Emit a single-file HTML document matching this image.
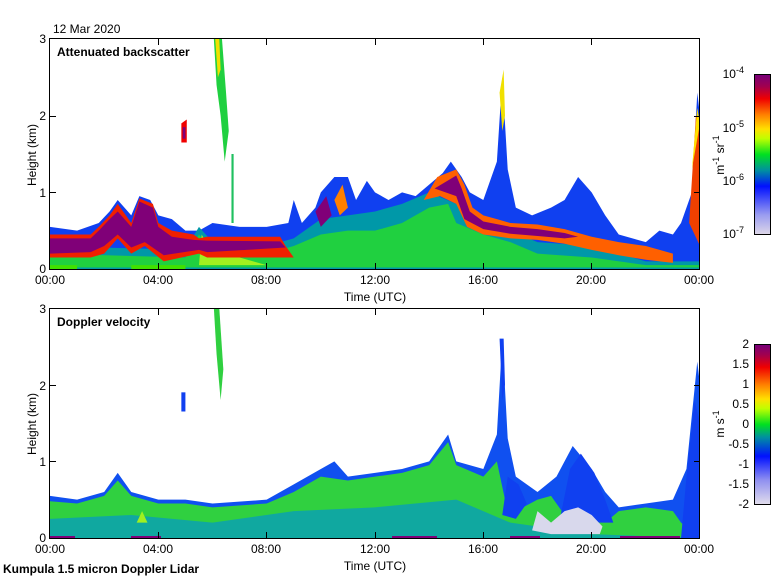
<!DOCTYPE html>
<html><head><meta charset="utf-8"><style>
html,body{margin:0;padding:0;background:#fff;}
svg{display:block;font-family:"Liberation Sans",sans-serif;}
</style></head><body>
<svg width="780" height="580" viewBox="0 0 780 580" xmlns="http://www.w3.org/2000/svg">
<defs>
<linearGradient id="cb1" x1="0" y1="1" x2="0" y2="0">
<stop offset="0" stop-color="#dcd6e8"/><stop offset="0.12" stop-color="#9a9cf0"/>
<stop offset="0.3" stop-color="#0010ff"/><stop offset="0.4" stop-color="#0090a0"/>
<stop offset="0.5" stop-color="#00e020"/><stop offset="0.6" stop-color="#c0ff00"/>
<stop offset="0.66" stop-color="#ffe000"/><stop offset="0.75" stop-color="#ff8000"/>
<stop offset="0.85" stop-color="#f00000"/><stop offset="0.93" stop-color="#a00050"/>
<stop offset="1" stop-color="#780078"/></linearGradient>
<linearGradient id="cb2" x1="0" y1="1" x2="0" y2="0">
<stop offset="0" stop-color="#e0dcec"/><stop offset="0.15" stop-color="#9090f0"/>
<stop offset="0.3" stop-color="#0010ff"/><stop offset="0.42" stop-color="#0090a0"/>
<stop offset="0.5" stop-color="#00e020"/><stop offset="0.6" stop-color="#c0ff00"/>
<stop offset="0.66" stop-color="#ffe000"/><stop offset="0.75" stop-color="#ff8000"/>
<stop offset="0.86" stop-color="#f00000"/><stop offset="0.94" stop-color="#a00050"/>
<stop offset="1" stop-color="#780078"/></linearGradient>
</defs>

<text x="53" y="33" font-size="12">12 Mar 2020</text>

<!-- TOP PLOT DATA -->
<g transform="translate(50,269) scale(27.083,-76.667)">
<polygon fill="#1040f0" points="0,0 0,0.55 1,0.5 1.8,0.6 2.2,0.75 2.5,0.9 3,0.7 3.3,0.95 3.7,0.9 4,0.7 4.5,0.65 5,0.5 5.5,0.5 6,0.6 7,0.55 8,0.55 8.8,0.6 9,0.9 9.3,0.6 9.8,0.8 10,1.0 10.5,1.2 11,1.2 11.3,0.9 11.7,1.15 12,1.0 12.5,0.9 13,1.0 13.5,0.95 14,1.1 14.5,1.25 14.8,1.4 15.2,1.2 15.5,1.0 16,0.9 16.5,1.4 16.7,2.5 16.9,1.3 17.2,0.8 17.8,0.7 18.5,0.8 19,0.9 19.5,1.2 20,1.0 20.5,0.7 21,0.45 22,0.35 22.5,0.5 23,0.45 23.3,0.6 23.7,1.0 23.9,2.3 24,2.0 24,0"/>
<polygon fill="#0098a8" points="0,0 0,0.3 5,0.25 5.5,0.55 6,0.35 8,0.3 9,0.4 10,0.65 11,0.7 12,0.75 13,0.85 14,1.0 15,0.85 16,0.65 17,0.5 18,0.35 20,0.3 22,0.1 24,0.1 24,0"/>
<polygon fill="#20d040" points="0,0.02 0,0.2 5,0.15 5.5,0.45 6,0.22 8,0.2 9,0.3 10,0.45 11,0.5 12,0.5 13,0.6 14,0.8 14.7,0.85 15,0.6 16,0.45 17,0.35 18,0.2 20,0.15 22,0.05 24,0.05 24,0.02"/>
<polygon fill="#a0f020" points="5.5,0.05 5.6,0.45 6,0.2 7,0.15 8,0.05"/>
<!-- red border of purple band -->
<polygon fill="#f02000" points="0,0.15 0,0.45 1.5,0.45 1.8,0.55 2.2,0.7 2.5,0.85 3,0.6 3.3,0.92 3.8,0.85 4,0.6 4.5,0.5 5.3,0.45 5.5,0.4 5.8,0.42 8.5,0.42 8.7,0.3 9,0.15 5.8,0.15 5.5,0.2 4.2,0.1 3.5,0.3 3,0.2 2.5,0.4 2,0.2 1.5,0.15"/>
<polygon fill="#800078" points="0,0.2 0,0.4 1.5,0.4 1.8,0.5 2.2,0.65 2.5,0.75 3,0.55 3.3,0.88 3.8,0.8 4,0.55 4.5,0.42 5.3,0.38 5.8,0.37 8.5,0.36 8.7,0.28 5.8,0.22 5.5,0.25 4.2,0.18 3.5,0.35 3,0.28 2.5,0.45 2,0.3 1.5,0.22"/>
<!-- red curve 14-22 -->
<polygon fill="#ff6000" points="13.8,0.9 14.3,1.2 15,1.3 15.3,1.1 15.6,0.8 16,0.7 16.5,0.65 17,0.6 18,0.58 19,0.52 20,0.42 21,0.35 22,0.3 23,0.2 23,0.08 22,0.12 21,0.18 20,0.25 19,0.33 18,0.38 17,0.4 16,0.45 15.4,0.55 15,0.85 14.4,0.95"/>
<polygon fill="#800078" points="14.2,1.05 15,1.22 15.2,1.05 15.5,0.75 16,0.62 17,0.55 18,0.52 19,0.47 19.5,0.42 19,0.4 18,0.43 17,0.46 16,0.52 15.3,0.65 15,0.95"/>
<polygon fill="#800078" points="9.8,0.75 10.2,0.95 10.4,0.7 10,0.55"/>
<polygon fill="#ff8000" points="10.5,0.9 10.8,1.1 11,0.8 10.7,0.7"/>
<!-- isolated bits -->
<polygon fill="#f00000" points="4.85,1.65 4.85,1.9 5.05,1.95 5.05,1.65"/>
<polygon fill="#800078" points="4.9,1.7 4.9,1.85 5.0,1.85 5.0,1.7"/>
<polygon fill="#20d040" points="6.05,3 6.35,3 6.5,2.3 6.6,1.8 6.45,1.4 6.3,2.0 6.15,2.4"/>
<polygon fill="#f0e000" points="6.1,3 6.25,3 6.3,2.6 6.2,2.5"/>
<polygon fill="#20c060" points="6.7,0.6 6.78,0.6 6.78,1.5 6.7,1.5"/>
<polygon fill="#f0e000" points="16.6,2.3 16.75,2.6 16.8,2.0 16.7,1.8"/>
<polygon fill="#f04000" points="23.6,0.6 23.85,2.0 24,1.9 24,0.3"/>
<polygon fill="#ffe000" points="23.7,1.3 23.9,2.1 24,1.9"/>
<!-- bottom strips -->
<polygon fill="#40e000" points="0,0 0,0.05 1.0,0.05 1.0,0 3.0,0 3.0,0.05 5.0,0.05 5.0,0"/>
</g>

<!-- BOTTOM PLOT DATA -->
<g transform="translate(50,538) scale(27.083,-76.667)">
<polygon fill="#1050f0" points="0,0 0,0.55 1,0.5 2,0.6 2.5,0.85 3,0.6 4,0.5 5,0.5 6,0.45 8,0.5 9,0.7 10,0.9 10.5,1.0 11,0.8 12,0.85 13,0.9 14,1.0 14.7,1.35 15,1.0 16,0.9 16.5,1.35 16.7,2.6 16.9,1.3 17.2,0.8 18,0.6 18.7,0.8 19.3,1.2 20,0.9 20.5,0.6 21,0.4 22,0.45 23,0.5 23.5,0.9 23.9,2.3 24,2.0 24,0"/>
<polygon fill="#30d040" points="0,0 0,0.48 1,0.45 2,0.55 2.5,0.75 3,0.55 4,0.45 5,0.45 6,0.4 8,0.45 9,0.6 10,0.8 11,0.75 12,0.8 13,0.85 14,0.95 14.7,1.25 15,0.95 16,0.8 16.5,1.0 16.8,0.5 17.2,0.35 18,0.5 18.5,0.55 19,0.3 20.5,0.2 21,0.35 22,0.4 23,0.35 23.3,0.2 24,0"/>
<polygon fill="#10a8a0" points="0,0 0,0.25 3,0.3 6,0.2 9,0.35 12,0.4 15,0.5 17,0.2 20,0.05 24,0"/>
<polygon fill="#a0f020" points="3.2,0.2 3.4,0.35 3.6,0.2"/>
<polygon fill="#1040f0" points="16.7,0.3 16.9,0.8 17.3,0.7 17.6,0.45 17.2,0.25"/>
<polygon fill="#1040f0" points="18.8,0.2 19.2,0.9 19.6,1.1 20.1,0.85 20.5,0.5 20.8,0.2"/>
<polygon fill="#1040f0" points="23.3,0 23.5,0.8 23.8,1.8 24,1.5 24,0"/>
<polygon fill="#d8d8ec" points="17.8,0.1 18,0.35 18.5,0.2 19,0.35 19.5,0.4 20,0.3 20.4,0.15 20.3,0.05 18.5,0.05"/>
<polygon fill="#30d040" points="6.05,3 6.25,3 6.4,2.2 6.3,1.8 6.15,2.4"/>
<polygon fill="#1040f0" points="4.85,1.65 4.85,1.9 5.0,1.9 5.0,1.65"/>
<polygon fill="#1040f0" points="16.6,2.6 16.75,2.6 16.8,2.0 16.7,1.8"/>
</g>
<g fill="#800078">
<rect x="50" y="536" width="25" height="3"/><rect x="131" y="536" width="30" height="3"/>
<rect x="392" y="536" width="45" height="3"/><rect x="510" y="536" width="30" height="3"/>
<rect x="620" y="536" width="60" height="3"/>
</g>

<!-- AXES FRAMES -->
<g fill="none" stroke="#000" stroke-width="1">
<rect x="49.5" y="38.5" width="650" height="231"/>
<rect x="49.5" y="308.5" width="650" height="230"/>
<rect x="754.5" y="74.5" width="16" height="160"/>
<rect x="754.5" y="344.5" width="16" height="160"/>
<path d="M158.5,39v6M266.5,39v6M375.5,39v6M483.5,39v6M591.5,39v6M158.5,269v-6M266.5,269v-6M375.5,269v-6M483.5,269v-6M591.5,269v-6M50,192.5h6M50,116.5h6M700,192.5h-6M700,116.5h-6"/>
<path d="M158.5,309v6M266.5,309v6M375.5,309v6M483.5,309v6M591.5,309v6M158.5,538v-6M266.5,538v-6M375.5,538v-6M483.5,538v-6M591.5,538v-6M50,461.5h6M50,385.5h6M700,461.5h-6M700,385.5h-6"/>
</g>
<rect x="755" y="75" width="15" height="159" fill="url(#cb1)"/>
<rect x="755" y="345" width="15" height="159" fill="url(#cb2)"/>

<g font-size="12">
<text x="57" y="56" font-weight="bold">Attenuated backscatter</text>
<text x="57" y="326" font-weight="bold">Doppler velocity</text>
<g text-anchor="end">
<text x="46" y="43">3</text><text x="46" y="120">2</text><text x="46" y="197">1</text><text x="46" y="273">0</text>
<text x="46" y="313">3</text><text x="46" y="390">2</text><text x="46" y="466">1</text><text x="46" y="542">0</text>
</g>
<g text-anchor="middle">
<text x="50" y="284">00:00</text><text x="158" y="284">04:00</text><text x="266" y="284">08:00</text><text x="375" y="284">12:00</text><text x="483" y="284">16:00</text><text x="591" y="284">20:00</text><text x="699" y="284">00:00</text>
<text x="375" y="301">Time (UTC)</text>
<text x="50" y="553">00:00</text><text x="158" y="553">04:00</text><text x="266" y="553">08:00</text><text x="375" y="553">12:00</text><text x="483" y="553">16:00</text><text x="591" y="553">20:00</text><text x="699" y="553">00:00</text>
<text x="375" y="570">Time (UTC)</text>
</g>
<text transform="translate(36,155) rotate(-90)" text-anchor="middle">Height (km)</text>
<text transform="translate(36,424) rotate(-90)" text-anchor="middle">Height (km)</text>
<text x="3" y="573" font-weight="bold">Kumpula 1.5 micron Doppler Lidar</text>
<g text-anchor="end">
<text x="744" y="78">10<tspan font-size="9" dy="-5">-4</tspan></text>
<text x="744" y="132">10<tspan font-size="9" dy="-5">-5</tspan></text>
<text x="744" y="185">10<tspan font-size="9" dy="-5">-6</tspan></text>
<text x="744" y="238">10<tspan font-size="9" dy="-5">-7</tspan></text>
<text x="749" y="348">2</text><text x="749" y="368">1.5</text><text x="749" y="388">1</text><text x="749" y="408">0.5</text>
<text x="749" y="428">0</text><text x="749" y="448">-0.5</text><text x="749" y="468">-1</text><text x="749" y="488">-1.5</text><text x="749" y="508">-2</text>
</g>
<text transform="translate(724,155) rotate(-90)" text-anchor="middle">m<tspan font-size="9" dy="-5">-1</tspan><tspan dy="5"> sr</tspan><tspan font-size="9" dy="-5">-1</tspan></text>
<text transform="translate(724,424) rotate(-90)" text-anchor="middle">m s<tspan font-size="9" dy="-5">-1</tspan></text>
</g>
</svg>
</body></html>
